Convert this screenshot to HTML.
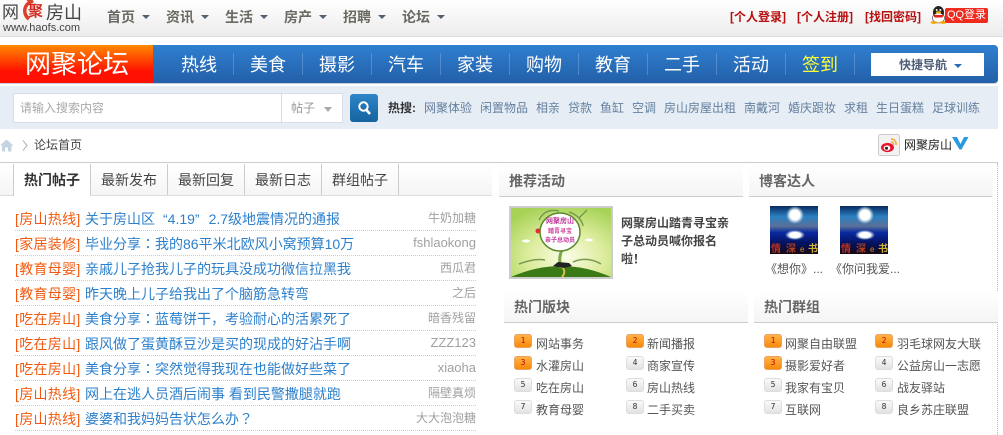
<!DOCTYPE html>
<html><head><meta charset="utf-8"><style>
html,body{margin:0;padding:0;background:#fff}
body{width:1003px;height:435px;position:relative;overflow:hidden;font-family:"Liberation Sans","Noto Sans CJK SC",sans-serif;font-size:12px;color:#333}
.a,.t{position:absolute;white-space:nowrap}
.t{height:16px;line-height:16px}
.nav{font-size:14px;font-weight:bold;color:#6a6a62;top:9px}
.car{position:absolute;top:15px;width:0;height:0;border:4px solid transparent;border-top:4px solid #52606e;border-bottom:0}
.rl{color:#b81010;top:9px;font-weight:bold}
.bn{font-size:18px;color:#fff;top:53px;height:24px;line-height:24px}
.sp{position:absolute;top:53px;width:1px;height:22px;background:rgba(255,255,255,.2)}
.hk{top:100px;color:#64809e}
.tab{position:absolute;top:164px;width:76px;height:31px;border-left:1px solid #ccc;text-align:center;line-height:32px;font-size:14px;color:#444}
.row{position:absolute;left:15px;width:461px;height:25px;border-bottom:1px dotted #ccc;font-size:14px;line-height:28px;white-space:nowrap}
.row i{font-style:normal;color:#f05a10;display:inline-block;width:70px;letter-spacing:.3px}
.row b{font-weight:normal;color:#2c80cc}
.row u{position:absolute;right:0;top:-1px;text-decoration:none;color:#a0a0a0;font-size:12px}
.row u.e{font-size:13px}
.p{font-family:"Noto Sans CJK TC",sans-serif}
.hd{position:absolute;height:31px;background:linear-gradient(#fff,#f5f5f5);border-bottom:1px solid #ccc;font-size:14px;font-weight:bold;color:#666;line-height:33px;text-indent:10px}
.bd{position:absolute;width:18px;height:14px;border-radius:3px;font-size:8px;line-height:12px;text-align:center;box-sizing:border-box;font-family:"DejaVu Sans Mono",monospace}
.o{background:linear-gradient(#ffb347,#f58a0a);color:#c00;border:1px solid #eda060}
.g{background:linear-gradient(#fafafa,#e2e2e2);color:#333;border:1px solid #ddd}
.l{position:absolute;color:#555;height:16px;line-height:16px;white-space:nowrap}
</style></head><body>
<!-- top bar -->
<div class="a" style="left:0;top:0;width:1003px;height:36px;background:linear-gradient(#fff,#ececec);border-bottom:1px solid #ddd"></div>
<div class="t" style="left:2px;top:3px;font-size:17px;height:20px;line-height:20px;color:#444">网</div>
<svg class="a" style="left:20px;top:-2px" width="26" height="24" viewBox="0 0 26 24"><path d="M13 3A10 10 0 0 0 9 21" fill="none" stroke="#d8402a" stroke-width="3.500"/><path d="M5 1q6-1 9 3l-4 1z" fill="#d8402a"/><text x="8" y="18" font-size="15" font-weight="bold" fill="#d02a20" font-family="Noto Sans CJK SC">聚</text></svg>
<div class="t" style="left:46px;top:2px;font-size:18px;height:22px;line-height:22px;color:#444">房山</div>
<div class="t" style="left:3px;top:21px;font-size:11px;height:14px;line-height:14px;color:#444">www.haofs.com</div>
<div class="t nav" style="left:107px">首页</div><div class="car" style="left:142px"></div>
<div class="t nav" style="left:166px">资讯</div><div class="car" style="left:201px"></div>
<div class="t nav" style="left:225px">生活</div><div class="car" style="left:260px"></div>
<div class="t nav" style="left:284px">房产</div><div class="car" style="left:319px"></div>
<div class="t nav" style="left:343px">招聘</div><div class="car" style="left:378px"></div>
<div class="t nav" style="left:402px">论坛</div><div class="car" style="left:437px"></div>
<div class="t rl" style="left:730px">[个人登录]</div>
<div class="t rl" style="left:797px">[个人注册]</div>
<div class="t rl" style="left:865px">[找回密码]</div>
<svg class="a" style="left:930px;top:6px" width="17" height="18" viewBox="0 0 17 18"><ellipse cx="8.500" cy="6.500" rx="5.500" ry="6.500" fill="#222"/><ellipse cx="8.500" cy="12" rx="6" ry="5" fill="#fff" stroke="#333" stroke-width=".6"/><path d="M3.500 9h10l-1 2.500h-8z" fill="#d22"/><ellipse cx="8.500" cy="6.500" rx="2.500" ry="1.200" fill="#f5b50a"/><circle cx="6.700" cy="4" r="1" fill="#fff"/><circle cx="10.300" cy="4" r="1" fill="#fff"/><ellipse cx="4" cy="16.500" rx="3.500" ry="1.400" fill="#f5a50a"/><ellipse cx="13" cy="16.500" rx="3.500" ry="1.400" fill="#f5a50a"/></svg>
<div class="a" style="left:945px;top:8px;width:43px;height:15px;background:#ee2b1d;border-radius:2px;color:#fff;font-size:11px;line-height:15px;text-align:center">QQ登录</div>
<!-- blue bar -->
<div class="a" style="left:0;top:45px;width:998px;height:38px;border-radius:0 4px 4px 0;background:linear-gradient(#2f7fd0,#2360a8);border-bottom:1px solid #ccd"></div>
<div class="a" style="left:0;top:45px;width:153px;height:38px;background:linear-gradient(#ff8a00,#ff1000 70%)"></div>
<div class="t" style="left:25px;top:47px;font-size:26px;height:34px;line-height:34px;color:#fff">网聚论坛</div>
<div class="t bn" style="left:181px">热线</div><div class="sp" style="left:233px"></div>
<div class="t bn" style="left:250px">美食</div><div class="sp" style="left:302px"></div>
<div class="t bn" style="left:319px">摄影</div><div class="sp" style="left:371px"></div>
<div class="t bn" style="left:388px">汽车</div><div class="sp" style="left:440px"></div>
<div class="t bn" style="left:457px">家装</div><div class="sp" style="left:509px"></div>
<div class="t bn" style="left:526px">购物</div><div class="sp" style="left:578px"></div>
<div class="t bn" style="left:595px">教育</div><div class="sp" style="left:647px"></div>
<div class="t bn" style="left:664px">二手</div><div class="sp" style="left:716px"></div>
<div class="t bn" style="left:733px">活动</div><div class="sp" style="left:785px"></div>
<div class="t bn" style="left:802px;color:#ffff33">签到</div><div class="sp" style="left:854px"></div>
<div class="a" style="left:871px;top:53px;width:113px;height:23px;background:#fff"></div>
<div class="t" style="left:899px;top:57px;font-weight:bold;color:#4f5f78">快捷导航</div>
<div class="a" style="left:954px;top:64px;width:0;height:0;border:4px solid transparent;border-top:4px solid #2a6cb4;border-bottom:0"></div>
<!-- search -->
<div class="a" style="left:0;top:86px;width:998px;height:43px;background:#e6edf5"></div>
<div class="a" style="left:13px;top:93px;width:328px;height:28px;background:#fff;border:1px solid #d6dde6"></div>
<div class="a" style="left:281px;top:94px;width:1px;height:28px;background:#d6dde6"></div>
<div class="t" style="left:20px;top:100px;color:#aaa">请输入搜索内容</div>
<div class="t" style="left:291px;top:100px;color:#999">帖子</div>
<div class="a" style="left:324px;top:107px;width:0;height:0;border:4px solid transparent;border-top:5px solid #aaa;border-bottom:0"></div>
<div class="a" style="left:350px;top:94px;width:28px;height:28px;border-radius:3px;background:linear-gradient(#2e85c8,#14649e)"></div>
<svg class="a" style="left:357px;top:100px" width="15" height="16" viewBox="0 0 15 16"><circle cx="6.500" cy="6.500" r="4.200" fill="none" stroke="#fff" stroke-width="2"/><path d="M9.500 10l3.500 4" stroke="#fff" stroke-width="2.500"/></svg>
<div class="t" style="left:388px;top:100px;font-weight:bold;color:#333">热搜:</div>
<div class="t hk" style="left:424px">网聚体验</div><div class="t hk" style="left:480px">闲置物品</div><div class="t hk" style="left:536px">相亲</div><div class="t hk" style="left:568px">贷款</div><div class="t hk" style="left:600px">鱼缸</div><div class="t hk" style="left:632px">空调</div><div class="t hk" style="left:664px">房山房屋出租</div><div class="t hk" style="left:744px">南戴河</div><div class="t hk" style="left:788px">婚庆跟妆</div><div class="t hk" style="left:844px">求租</div><div class="t hk" style="left:876px">生日蛋糕</div><div class="t hk" style="left:932px">足球训练</div>
<!-- breadcrumb -->
<svg class="a" style="left:0;top:139px" width="14" height="13" viewBox="0 0 14 13"><path d="M0 6.500L6.500 .5 13.500 6.500H11.500V12.500H8V8.500H5V12.500H2V6.500z" fill="#c4d4e2"/></svg>
<svg class="a" style="left:22px;top:140px" width="6" height="11" viewBox="0 0 6 11"><path d="M1 .5l4 5-4 5" fill="none" stroke="#aaa"/></svg>
<div class="t" style="left:34px;top:137px;color:#444">论坛首页</div>
<svg class="a" style="left:878px;top:134px" width="22" height="22" viewBox="0 0 22 22"><rect x=".5" y=".5" width="21" height="21" rx="2" fill="#f2f2f2" stroke="#ccc"/><ellipse cx="9.500" cy="13.500" rx="6.500" ry="4.600" fill="#e6162d"/><ellipse cx="9" cy="14" rx="3.300" ry="2.600" fill="#fff"/><circle cx="8.500" cy="14.300" r="1.500" fill="#222"/><path d="M13 5a5 5 0 0 1 5 6M13 8a2.500 2.500 0 0 1 2.500 3" fill="none" stroke="#f5a623" stroke-width="1.500"/></svg>
<div class="t" style="left:904px;top:137px;color:#222">网聚房山</div>
<svg class="a" style="left:952px;top:136px" width="17" height="14" viewBox="0 0 17 14"><path d="M0 1h5l3.500 7L12 1h4.500L9.500 13.500H7.500z" fill="#2a9ae0"/></svg>
<!-- frames -->
<div class="a" style="left:0;top:162px;width:998px;height:1px;background:#ccc"></div>
<div class="a" style="left:997px;top:163px;height:272px;border-left:1px dotted #bbb"></div>
<!-- tabs -->
<div class="a" style="left:0;top:164px;width:492px;height:31px;background:linear-gradient(#fff,#f5f5f5);border-bottom:1px solid #ddd"></div>
<div class="tab" style="left:13px;height:32px;background:#fff;font-weight:bold;color:#333">热门帖子</div>
<div class="tab" style="left:90px">最新发布</div>
<div class="tab" style="left:167px">最新回复</div>
<div class="tab" style="left:244px">最新日志</div>
<div class="tab" style="left:321px;border-right:1px solid #ccc">群组帖子</div>
<!-- list -->
<div class="row" style="top:205px"><i>[房山热线]</i><b>关于房山区<span style="margin-left:8px">“4.19”</span><span style="margin-left:9px">2.7</span>级地震情况的通报</b><u>牛奶加糖</u></div>
<div class="row" style="top:230px"><i>[家居装修]</i><b>毕业分享<span class="p">：</span>我的86平米北欧风小窝预算10万</b><u class="e">fshlaokong</u></div>
<div class="row" style="top:255px"><i>[教育母婴]</i><b>亲戚儿子抢我儿子的玩具没成功微信拉黑我</b><u>西瓜君</u></div>
<div class="row" style="top:280px"><i>[教育母婴]</i><b>昨天晚上儿子给我出了个脑筋急转弯</b><u>之后</u></div>
<div class="row" style="top:305px"><i>[吃在房山]</i><b>美食分享<span class="p">：</span>蓝莓饼干，考验耐心的活累死了</b><u>暗香残留</u></div>
<div class="row" style="top:330px"><i>[吃在房山]</i><b>跟风做了蛋黄酥豆沙是买的现成的好沾手啊</b><u class="e">ZZZ123</u></div>
<div class="row" style="top:355px"><i>[吃在房山]</i><b>美食分享<span class="p">：</span>突然觉得我现在也能做好些菜了</b><u class="e">xiaoha</u></div>
<div class="row" style="top:380px"><i>[房山热线]</i><b>网上在逃人员酒后闹事 看到民警撒腿就跑</b><u>隔壁真烦</u></div>
<div class="row" style="top:405px"><i>[房山热线]</i><b>婆婆和我妈妈告状怎么办<span class="p">？</span></b><u>大大泡泡糖</u></div>
<!-- right top -->
<div class="hd" style="left:499px;top:165px;width:244px">推荐活动</div>
<div class="hd" style="left:749px;top:165px;width:243px">博客达人</div>
<svg class="a" style="left:509px;top:206px" width="104" height="73" viewBox="0 0 104 73"><defs><radialGradient id="g" cx=".55" cy=".7" r=".75"><stop offset="0" stop-color="#fbfde8"/><stop offset=".5" stop-color="#dcec9c"/><stop offset="1" stop-color="#a6d256"/></radialGradient><linearGradient id="m" x1="0" y1="0" x2="0" y2="1"><stop offset="0" stop-color="#0a2a60"/><stop offset=".22" stop-color="#2a80c0"/><stop offset=".42" stop-color="#5a7098"/><stop offset=".55" stop-color="#0a2aa0"/><stop offset=".78" stop-color="#04125e"/><stop offset="1" stop-color="#180810"/></linearGradient><radialGradient id="b"><stop offset=".55" stop-color="#fff"/><stop offset="1" stop-color="#cfe8f4" stop-opacity="0"/></radialGradient></defs><rect x="1" y="1" width="102" height="71" fill="url(#g)" stroke="#ccc" stroke-width="2"/><path d="M2 71q50-22 100 0z" fill="#3c7a18"/><path d="M53 44q-4 8-1 18" stroke="#7aa848" stroke-width="3" fill="none"/><path d="M52 60q6 5 1 11" stroke="#d8c040" stroke-width="2" fill="none"/><path d="M30 14q6-12 20-9M60 6q12 4 14 14M70 12l8-8M10 58q16-6 26-4M64 56q14-6 28 2" stroke="#7a9a50" stroke-width="1.500" fill="none"/><ellipse cx="51" cy="26" rx="20" ry="19" fill="#fff" stroke="#5a8a2c" stroke-width="1.500"/><text x="51" y="17" font-size="7" font-weight="bold" fill="#c0389a" text-anchor="middle">网聚房山</text><text x="51" y="27" font-size="6" font-weight="bold" fill="#d0409a" text-anchor="middle">踏青寻宝</text><text x="51" y="36" font-size="6" font-weight="bold" fill="#c0389a" text-anchor="middle">亲子总动员</text><path d="M44 60l5-4 11 1 3 3-8 2z" fill="#222"/><circle cx="29" cy="25" r="2.500" fill="#e03030"/><ellipse cx="17" cy="35" rx="4" ry="1.500" fill="#fff"/><ellipse cx="80" cy="34" rx="4" ry="1.500" fill="#fff"/></svg>
<div class="a" style="left:621px;top:214px;width:112px;font-weight:bold;line-height:18px;color:#444;white-space:normal">网聚房山踏青寻宝亲子总动员喊你报名啦！</div>
<svg class="a" style="left:770px;top:206px" width="48" height="48" viewBox="0 0 48 48"><rect width="48" height="48" fill="url(#m)"/><circle cx="25" cy="9" r="9" fill="url(#b)"/><ellipse cx="25" cy="29" rx="10" ry="5" fill="url(#b)"/><text x="1" y="46" font-size="10" font-weight="bold" fill="#c03018">情</text><text x="16" y="46" font-size="10" font-weight="bold" fill="#b04020">深</text><text x="30" y="46" font-size="8" fill="#c89030">e</text><text x="38" y="46" font-size="10" font-weight="bold" fill="#d0b030">书</text></svg>
<svg class="a" style="left:840px;top:206px" width="48" height="48" viewBox="0 0 48 48"><rect width="48" height="48" fill="url(#m)"/><circle cx="25" cy="9" r="9" fill="url(#b)"/><ellipse cx="25" cy="29" rx="10" ry="5" fill="url(#b)"/><text x="1" y="46" font-size="10" font-weight="bold" fill="#c03018">情</text><text x="16" y="46" font-size="10" font-weight="bold" fill="#b04020">深</text><text x="30" y="46" font-size="8" fill="#c89030">e</text><text x="38" y="46" font-size="10" font-weight="bold" fill="#d0b030">书</text></svg>
<div class="t" style="left:765px;top:261px;color:#555">《想你》...</div>
<div class="t" style="left:830px;top:261px;color:#555">《你问我爱...</div>
<!-- right bottom -->
<div class="hd" style="left:504px;top:291px;width:244px">热门版块</div>
<div class="hd" style="left:754px;top:291px;width:244px">热门群组</div>
<div class="bd o" style="left:514px;top:334px">1</div><div class="l" style="left:536px;top:336px">网站事务</div>
<div class="bd o" style="left:626px;top:334px">2</div><div class="l" style="left:647px;top:336px">新闻播报</div>
<div class="bd o" style="left:514px;top:356px">3</div><div class="l" style="left:536px;top:358px">水灌房山</div>
<div class="bd g" style="left:626px;top:356px">4</div><div class="l" style="left:647px;top:358px">商家宣传</div>
<div class="bd g" style="left:514px;top:378px">5</div><div class="l" style="left:536px;top:380px">吃在房山</div>
<div class="bd g" style="left:626px;top:378px">6</div><div class="l" style="left:647px;top:380px">房山热线</div>
<div class="bd g" style="left:514px;top:400px">7</div><div class="l" style="left:536px;top:402px">教育母婴</div>
<div class="bd g" style="left:626px;top:400px">8</div><div class="l" style="left:647px;top:402px">二手买卖</div>
<div class="bd o" style="left:764px;top:334px">1</div><div class="l" style="left:785px;top:336px">网聚自由联盟</div>
<div class="bd o" style="left:875px;top:334px">2</div><div class="l" style="left:897px;top:336px">羽毛球网友大联</div>
<div class="bd o" style="left:764px;top:356px">3</div><div class="l" style="left:785px;top:358px">摄影爱好者</div>
<div class="bd g" style="left:875px;top:356px">4</div><div class="l" style="left:897px;top:358px">公益房山一志愿</div>
<div class="bd g" style="left:764px;top:378px">5</div><div class="l" style="left:785px;top:380px">我家有宝贝</div>
<div class="bd g" style="left:875px;top:378px">6</div><div class="l" style="left:897px;top:380px">战友驿站</div>
<div class="bd g" style="left:764px;top:400px">7</div><div class="l" style="left:785px;top:402px">互联网</div>
<div class="bd g" style="left:875px;top:400px">8</div><div class="l" style="left:897px;top:402px">良乡苏庄联盟</div>
</body></html>
